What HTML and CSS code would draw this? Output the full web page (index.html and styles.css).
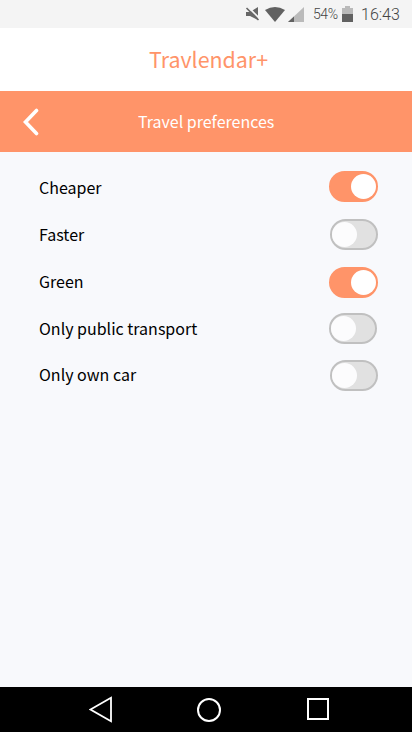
FILE: index.html
```html
<!DOCTYPE html>
<html lang="en">
<head>
<meta charset="utf-8">
<title>Travlendar+</title>
<link rel="stylesheet" href="styles.css">
</head>
<body>
<div class="status">
  <svg class="status-icons" width="60" height="18" viewBox="0 0 60 18">
    <path d="M1 7h4l8-5v13L5 11H1z" fill="#666"/>
    <path d="M2.500 1.500L15 14" stroke="#f4f4f4" stroke-width="1.800"/>
    <path d="M1.500 3L13.500 15" stroke="#666" stroke-width="1.600"/>
    <path d="M20 5Q30-1 40 5L30 17z" fill="#616161"/>
    <path d="M59 2v15H43z" fill="#bababa"/>
    <path d="M49 11.500v5.500h-6z" fill="#616161"/>
  </svg>
  <span class="percent">54%</span>
  <svg class="battery" width="11" height="17" viewBox="0 0 11 17">
    <path d="M3 0h5v2h3v7H0V2h3z" fill="#bababa"/><path d="M0 8h11v8H0z" fill="#616161"/>
  </svg>
  <span class="clock">16:43</span>
</div>
<header class="brand">Travlendar+</header>
<div class="toolbar">
  <svg class="back" width="18" height="30" viewBox="0 0 18 30"><path d="M15.500 3.500L4.500 15L15.500 26.500" fill="none" stroke="#fff" stroke-width="3.600" stroke-linecap="round"/></svg>
  <h1 class="heading">Travel preferences</h1>
</div>
<main class="prefs">
  <div class="row first"><span class="label">Cheaper</span><span class="switch on"><span class="knob"></span></span></div>
  <div class="row"><span class="label">Faster</span><span class="switch"><span class="knob"></span></span></div>
  <div class="row third"><span class="label">Green</span><span class="switch on"><span class="knob"></span></span></div>
  <div class="row inset"><span class="label">Only public transport</span><span class="switch"><span class="knob"></span></span></div>
  <div class="row last"><span class="label">Only own car</span><span class="switch"><span class="knob"></span></span></div>
</main>
<nav class="navbar">
  <svg width="24" height="28" viewBox="0 0 24 28"><path d="M1.500 13.500L22 1.800V25.200z" fill="none" stroke="#fff" stroke-width="1.800"/></svg>
  <svg width="26" height="26" viewBox="0 0 26 26"><circle cx="13" cy="13" r="11" fill="none" stroke="#fff" stroke-width="2"/></svg>
  <svg class="recents" width="22" height="22" viewBox="0 0 22 22"><path d="M1 1h20v20H1z" fill="none" stroke="#fff" stroke-width="2"/></svg>
</nav>
</body>
</html>
```
FILE: styles.css
```css
* { box-sizing: border-box; }
body {
  margin: 0;
  width: 412px;
  height: 732px;
  display: flex;
  flex-direction: column;
  overflow: hidden;
  background: #f8f9fc;
  color: #000;
  font-family: "Noto Sans CJK SC", "Noto Sans", sans-serif;
}
svg { display: block; flex: none; }
.status {
  height: 28px;
  display: flex;
  align-items: center;
  padding-left: 245px;
  background: #f4f4f4;
  color: #444;
  font-family: Roboto, sans-serif;
  font-weight: 300;
  white-space: nowrap;
}
.percent { width: 29px; margin-left: 8px; font-size: 14px; letter-spacing: -0.4px; }
.clock { margin-left: 8px; font-size: 16px; }
.brand {
  height: 63px;
  background: #fff;
  color: #ff9469;
  font-size: 21.4px;
  line-height: 61px;
  text-align: center;
  padding-left: 5px;
}
.toolbar {
  height: 61px;
  display: flex;
  align-items: center;
  padding-left: 21px;
  background: #ff9469;
  color: #fff;
}
.heading { margin: 0; padding: 0 0 2px 99px; font-size: 16px; font-weight: 400; line-height: 24px; }
.prefs { flex: 1; padding: 12px 34px 0 39px; }
.row { height: 47px; display: flex; align-items: center; justify-content: space-between; }
.row.inset { padding-right: 1px; }
.label { padding-bottom: 2px; font-size: 16px; line-height: 24px; }
.last .label { padding-bottom: 4px; }
.switch {
  width: 48px;
  height: 31px;
  display: flex;
  align-items: center;
  border: 2px solid #c0c0c0;
  border-radius: 16px;
  background: #e1e1e1;
}
.on { width: 49px; justify-content: flex-end; background: #ff9469; border-color: #ff9469; }
.first .switch { margin-bottom: 2px; }
.third .switch { margin-top: 1px; }
.knob { width: 25px; height: 25px; border-radius: 50%; background: #fcfcfd; }
.on .knob { background: #fff; }
.navbar {
  height: 45px;
  display: flex;
  align-items: center;
  padding-left: 89px;
  gap: 83px;
  background: #000;
}
.recents { margin: 0 0 1px 2px; }
```
